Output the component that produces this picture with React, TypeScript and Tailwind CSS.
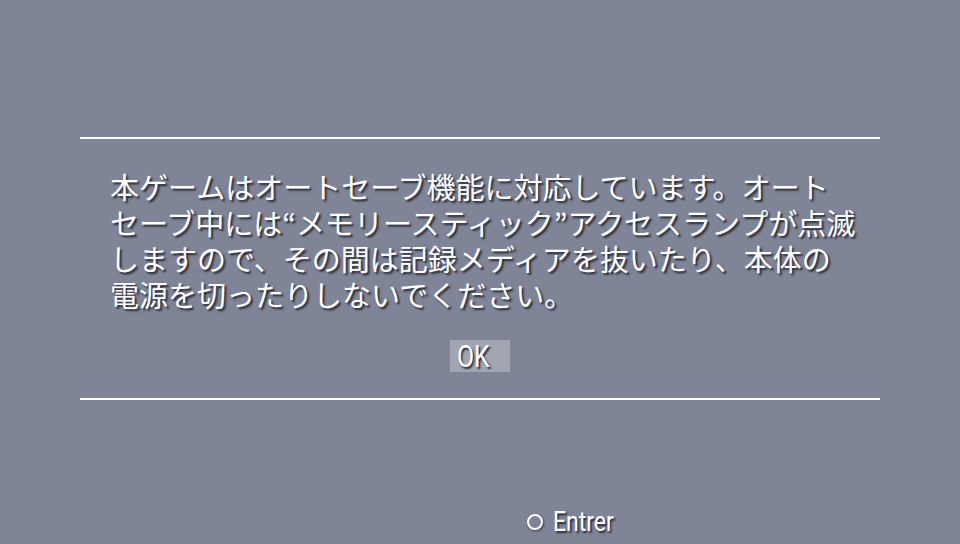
const lines = [
  "本ゲームはオートセーブ機能に対応しています。オート",
  "セーブ中には“メモリースティック”アクセスランプが点滅",
  "しますので、その間は記録メディアを抜いたり、本体の",
  "電源を切ったりしないでください。",
];

const shadow = "[text-shadow:2px_2px_2px_rgba(35,37,50,0.95)]";

export default function App() {
  return (
    <div className="w-[960px] h-[544px] bg-[#7f8496] flex flex-col overflow-hidden font-['Noto_Sans_CJK_JP',sans-serif] text-white">
      <div className="h-[137px]" />
      <div className="mx-[80px] h-[2px] bg-white" />
      <div className={`pl-[110px] pt-[29px] text-[29px] leading-[36px] ${shadow}`}>
        {lines.map((l) => (
          <div key={l} className="whitespace-nowrap">
            {l}
          </div>
        ))}
      </div>
      <div className="flex justify-center mt-[28px]">
        <div className="w-[60px] h-[32px] bg-[#a2a5b2] flex items-center pl-[7px]">
          <span
            className={`inline-block origin-left scale-x-[0.8] font-['Roboto',sans-serif] text-[31px] leading-none ${shadow}`}
          >
            OK
          </span>
        </div>
      </div>
      <div className="mt-[26px] mx-[80px] h-[2px] bg-white" />
      <div className="flex items-center mt-[108px] pl-[527px] gap-[10px]">
        <div className="w-[16px] h-[16px] rounded-full border-[2.5px] border-white [box-shadow:1px_1px_2px_rgba(35,37,50,0.8)]" />
        <span
          className={`inline-block origin-left scale-x-[0.82] font-['Roboto',sans-serif] text-[28px] leading-none ${shadow}`}
        >
          Entrer
        </span>
      </div>
    </div>
  );
}
